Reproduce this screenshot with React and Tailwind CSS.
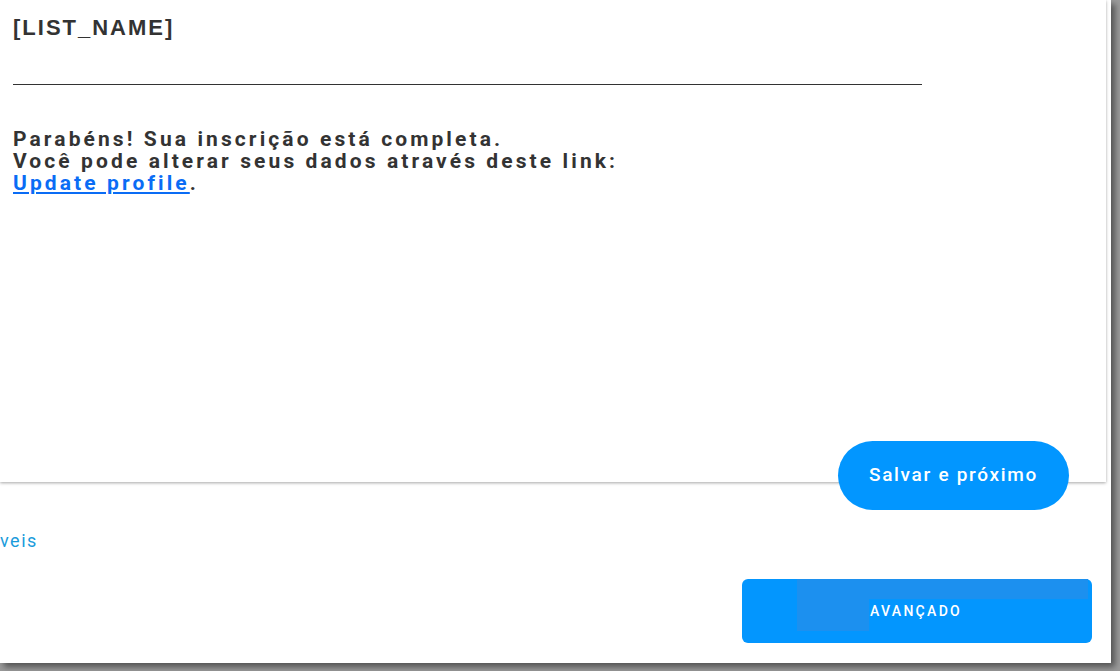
import React from 'react';

const App = () => {
  return (
    <div className="w-[1120px] h-[671px] bg-[#9a9a9a] overflow-hidden font-['Roboto',sans-serif]">
      <div className="relative w-[1111px] h-[663px] bg-white shadow-[4px_4px_6px_rgba(0,0,0,0.45)]">
        <div className="h-[482px] w-[1106px] bg-white shadow-[0_1px_3px_rgba(0,0,0,0.35)] pl-[13px] pt-[14px]">
          <h1 className="font-['Liberation_Sans',sans-serif] font-bold text-[22px] leading-[28px] tracking-[2px] text-[#333]">
            [LIST_NAME]
          </h1>
          <div className="mt-[42px] w-[909px] h-px bg-[#333]" />
          <p className="mt-[43px] font-bold text-[21px] leading-[22px] tracking-[3.1px] text-[#333]">
            Parabéns! Sua inscrição está completa.
            <br />
            Você pode alterar seus dados através deste link:
            <br />
            <a href="#" className="text-[#0a6cf5] underline underline-offset-2">Update profile</a>.
          </p>
        </div>

        <button className="absolute left-[838px] top-[441px] w-[231px] h-[69px] rounded-full bg-[#0296ff] text-white text-[19px] tracking-[1.7px] font-medium">
          Salvar e próximo
        </button>

        <div className="mt-[47px] ml-0 text-[#1a9bdb] text-[18px] tracking-[1.5px] leading-[24px]">
          veis
        </div>

        <div className="flex justify-end pr-[19px] mt-[26px]">
          <div className="relative w-[350px] h-[64px] rounded-[6px] bg-[#0396fe] flex items-center justify-center">
            <div className="absolute left-[126px] top-0 w-[220px] h-[20px] bg-[#1c90ef]" />
            <div className="absolute left-[55px] top-0 w-[72px] h-[52px] bg-[#1c90ef]" />
            <span className="relative ml-[-2px] text-white text-[14px] font-medium tracking-[2.3px]">AVANÇADO</span>
          </div>
        </div>
      </div>
    </div>
  );
};

export default App;
